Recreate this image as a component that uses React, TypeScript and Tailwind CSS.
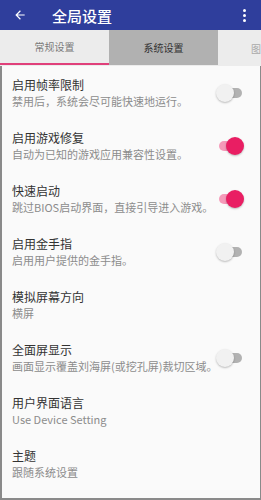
import React from "react";

const items = [
  { title: "启用帧率限制", sub: "禁用后，系统会尽可能快速地运行。", toggle: "off" },
  { title: "启用游戏修复", sub: "自动为已知的游戏应用兼容性设置。", toggle: "on" },
  { title: "快速启动", sub: "跳过BIOS启动界面，直接引导进入游戏。", toggle: "on" },
  { title: "启用金手指", sub: "启用用户提供的金手指。", toggle: "off" },
  { title: "模拟屏幕方向", sub: "横屏", toggle: "" },
  { title: "全面屏显示", sub: "画面显示覆盖刘海屏(或挖孔屏)裁切区域。", toggle: "off" },
  { title: "用户界面语言", sub: "Use Device Setting", toggle: "" },
  { title: "主题", sub: "跟随系统设置", toggle: "" },
];

function Toggle({ on }: { on: boolean }) {
  return (
    <div className="relative w-[26px] h-[18px] shrink-0">
      <div
        className={`absolute left-[3px] right-0 top-[4px] h-[10px] rounded-full ${on ? "bg-[#f59ab9]" : "bg-[#b2b2b2]"}`}
      />
      <div
        className={`absolute top-0 w-[18px] h-[18px] rounded-full shadow-[0_1px_2px_rgba(0,0,0,0.25)] ${on ? "right-[-2px] bg-[#e91e63]" : "left-0 bg-[#f1f1f1]"}`}
      />
    </div>
  );
}

export default function App() {
  return (
    <div
      className="w-[261px] h-[500px] overflow-hidden bg-[#fafafa] flex flex-col"
      style={{ fontFamily: '"Noto Sans CJK SC", "Noto Sans", sans-serif' }}
    >
      <div className="h-[30px] bg-[#2f3e9c] flex items-center text-white shrink-0">
        <svg width="14" height="14" viewBox="0 0 24 24" className="ml-[13px]">
          <path d="M20 11H7.8l5.6-5.6L12 4l-8 8 8 8 1.4-1.4L7.8 13H20z" fill="#fff" />
        </svg>
        <div className="ml-[25px] text-[15px] font-medium leading-none">全局设置</div>
        <div className="ml-auto mr-[15px] flex flex-col gap-[2px]">
          <div className="w-[3px] h-[3px] rounded-full bg-white" />
          <div className="w-[3px] h-[3px] rounded-full bg-white" />
          <div className="w-[3px] h-[3px] rounded-full bg-white" />
        </div>
      </div>
      <div className="h-[36px] flex shrink-0 bg-[#ececec] text-[10px]">
        <div className="w-[109px] flex flex-col">
          <div className="flex-1 flex items-center justify-center text-[#7a7a7a]">常规设置</div>
          <div className="h-[2px] bg-[#e0407a] mb-[1px]" />
        </div>
        <div className="w-[109px] bg-[#b1b1b1] flex items-center justify-center text-[#333] mb-[1px]">系统设置</div>
        <div className="flex-1 flex items-center pl-[33px] text-[#aaa]">图</div>
      </div>
      <div className="flex-1 flex flex-col border-l-2 border-b-2 border-r border-[#8a8a8a]">
        {items.map((it, i) => (
          <div key={i} className="h-[53px] flex items-center pl-[10px] pr-[18px] shrink-0">
            <div className="flex-1 min-w-0">
              <div className="text-[12px] leading-[17px] text-[#333]">{it.title}</div>
              <div className="text-[11px] leading-[16px] text-[#8c8c8c] whitespace-nowrap">{it.sub}</div>
            </div>
            {it.toggle && <Toggle on={it.toggle === "on"} />}
          </div>
        ))}
      </div>
    </div>
  );
}
